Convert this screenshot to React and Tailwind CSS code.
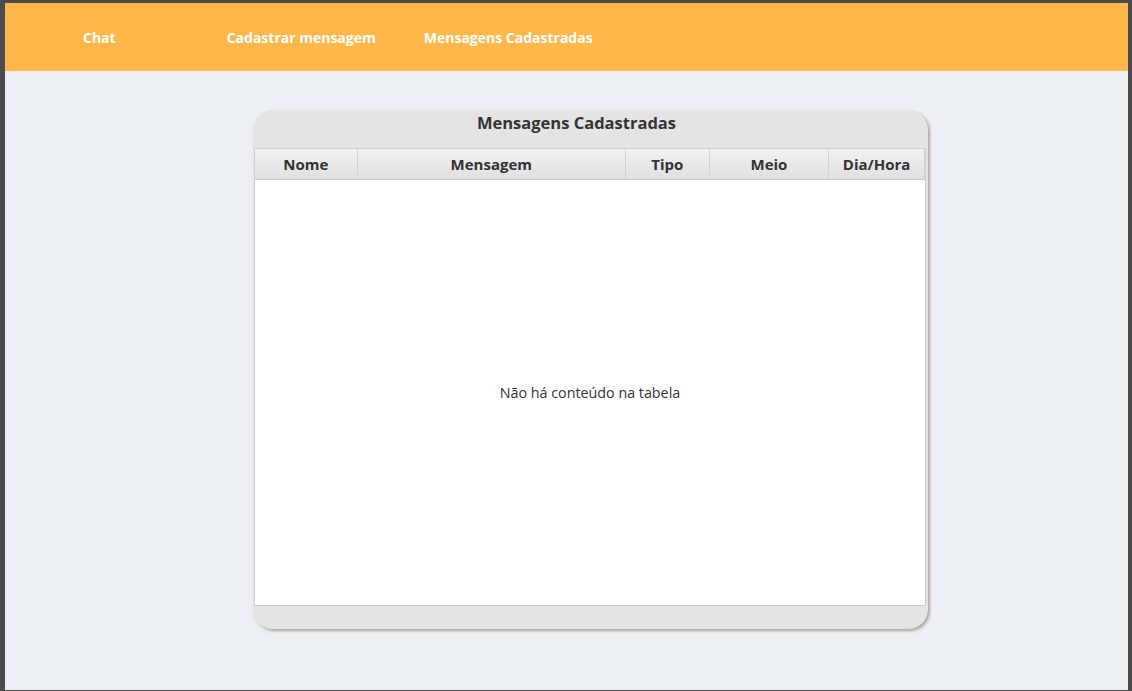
import React from "react";

const cols = [
  { label: "Nome", w: "w-[103px]" },
  { label: "Mensagem", w: "w-[269px]" },
  { label: "Tipo", w: "w-[84px]" },
  { label: "Meio", w: "w-[120px]" },
  { label: "Dia/Hora", w: "w-[96px]" },
];

export default function App() {
  return (
    <div
      className="h-[691px] w-[1132px] bg-[#4b4b4b] pt-[3px] pl-[5px] pr-[4px] pb-[1px] overflow-hidden"
      style={{ fontFamily: '"Open Sans", "Noto Sans", sans-serif' }}
    >
      <div className="flex h-full flex-col bg-[#eceff4]">
        <nav className="flex h-[68px] items-center bg-[#ffb74a] pt-[1px] text-[14px] font-bold text-white">
          <span className="ml-[78px]">Chat</span>
          <span className="ml-[111px]">Cadastrar mensagem</span>
          <span className="ml-[48px]">Mensagens Cadastradas</span>
        </nav>

        <div className="flex flex-1 justify-center pt-[39px] pl-[48px]">
          <div className="flex h-[519px] w-[675px] flex-col overflow-hidden rounded-[20px] bg-[#e4e4e4] shadow-[2px_2px_3px_rgba(120,105,105,0.55)]">
            <div className="flex h-[38px] items-center justify-center pb-[12px] pr-[28px] text-[16.5px] font-bold text-[#333]">
              Mensagens Cadastradas
            </div>
            <div className="ml-[1px] mr-[2px] flex flex-1 flex-col border border-[#cfcfcf] bg-white">
              <div className="flex h-[31px] border-b border-[#cdcdcd] bg-gradient-to-b from-[#f2f2f2] to-[#e0e0e0]">
                {cols.map((c) => (
                  <div
                    key={c.label}
                    className={`${c.w} flex items-center justify-center border-r border-[#d2d2d2] text-[15px] font-bold text-[#333]`}
                  >
                    {c.label}
                  </div>
                ))}
              </div>
              <div className="flex flex-1 items-center justify-center pt-[1px] text-[14.3px] text-[#333]">
                Não há conteúdo na tabela
              </div>
            </div>
            <div className="h-[23px]" />
          </div>
        </div>
      </div>
    </div>
  );
}
